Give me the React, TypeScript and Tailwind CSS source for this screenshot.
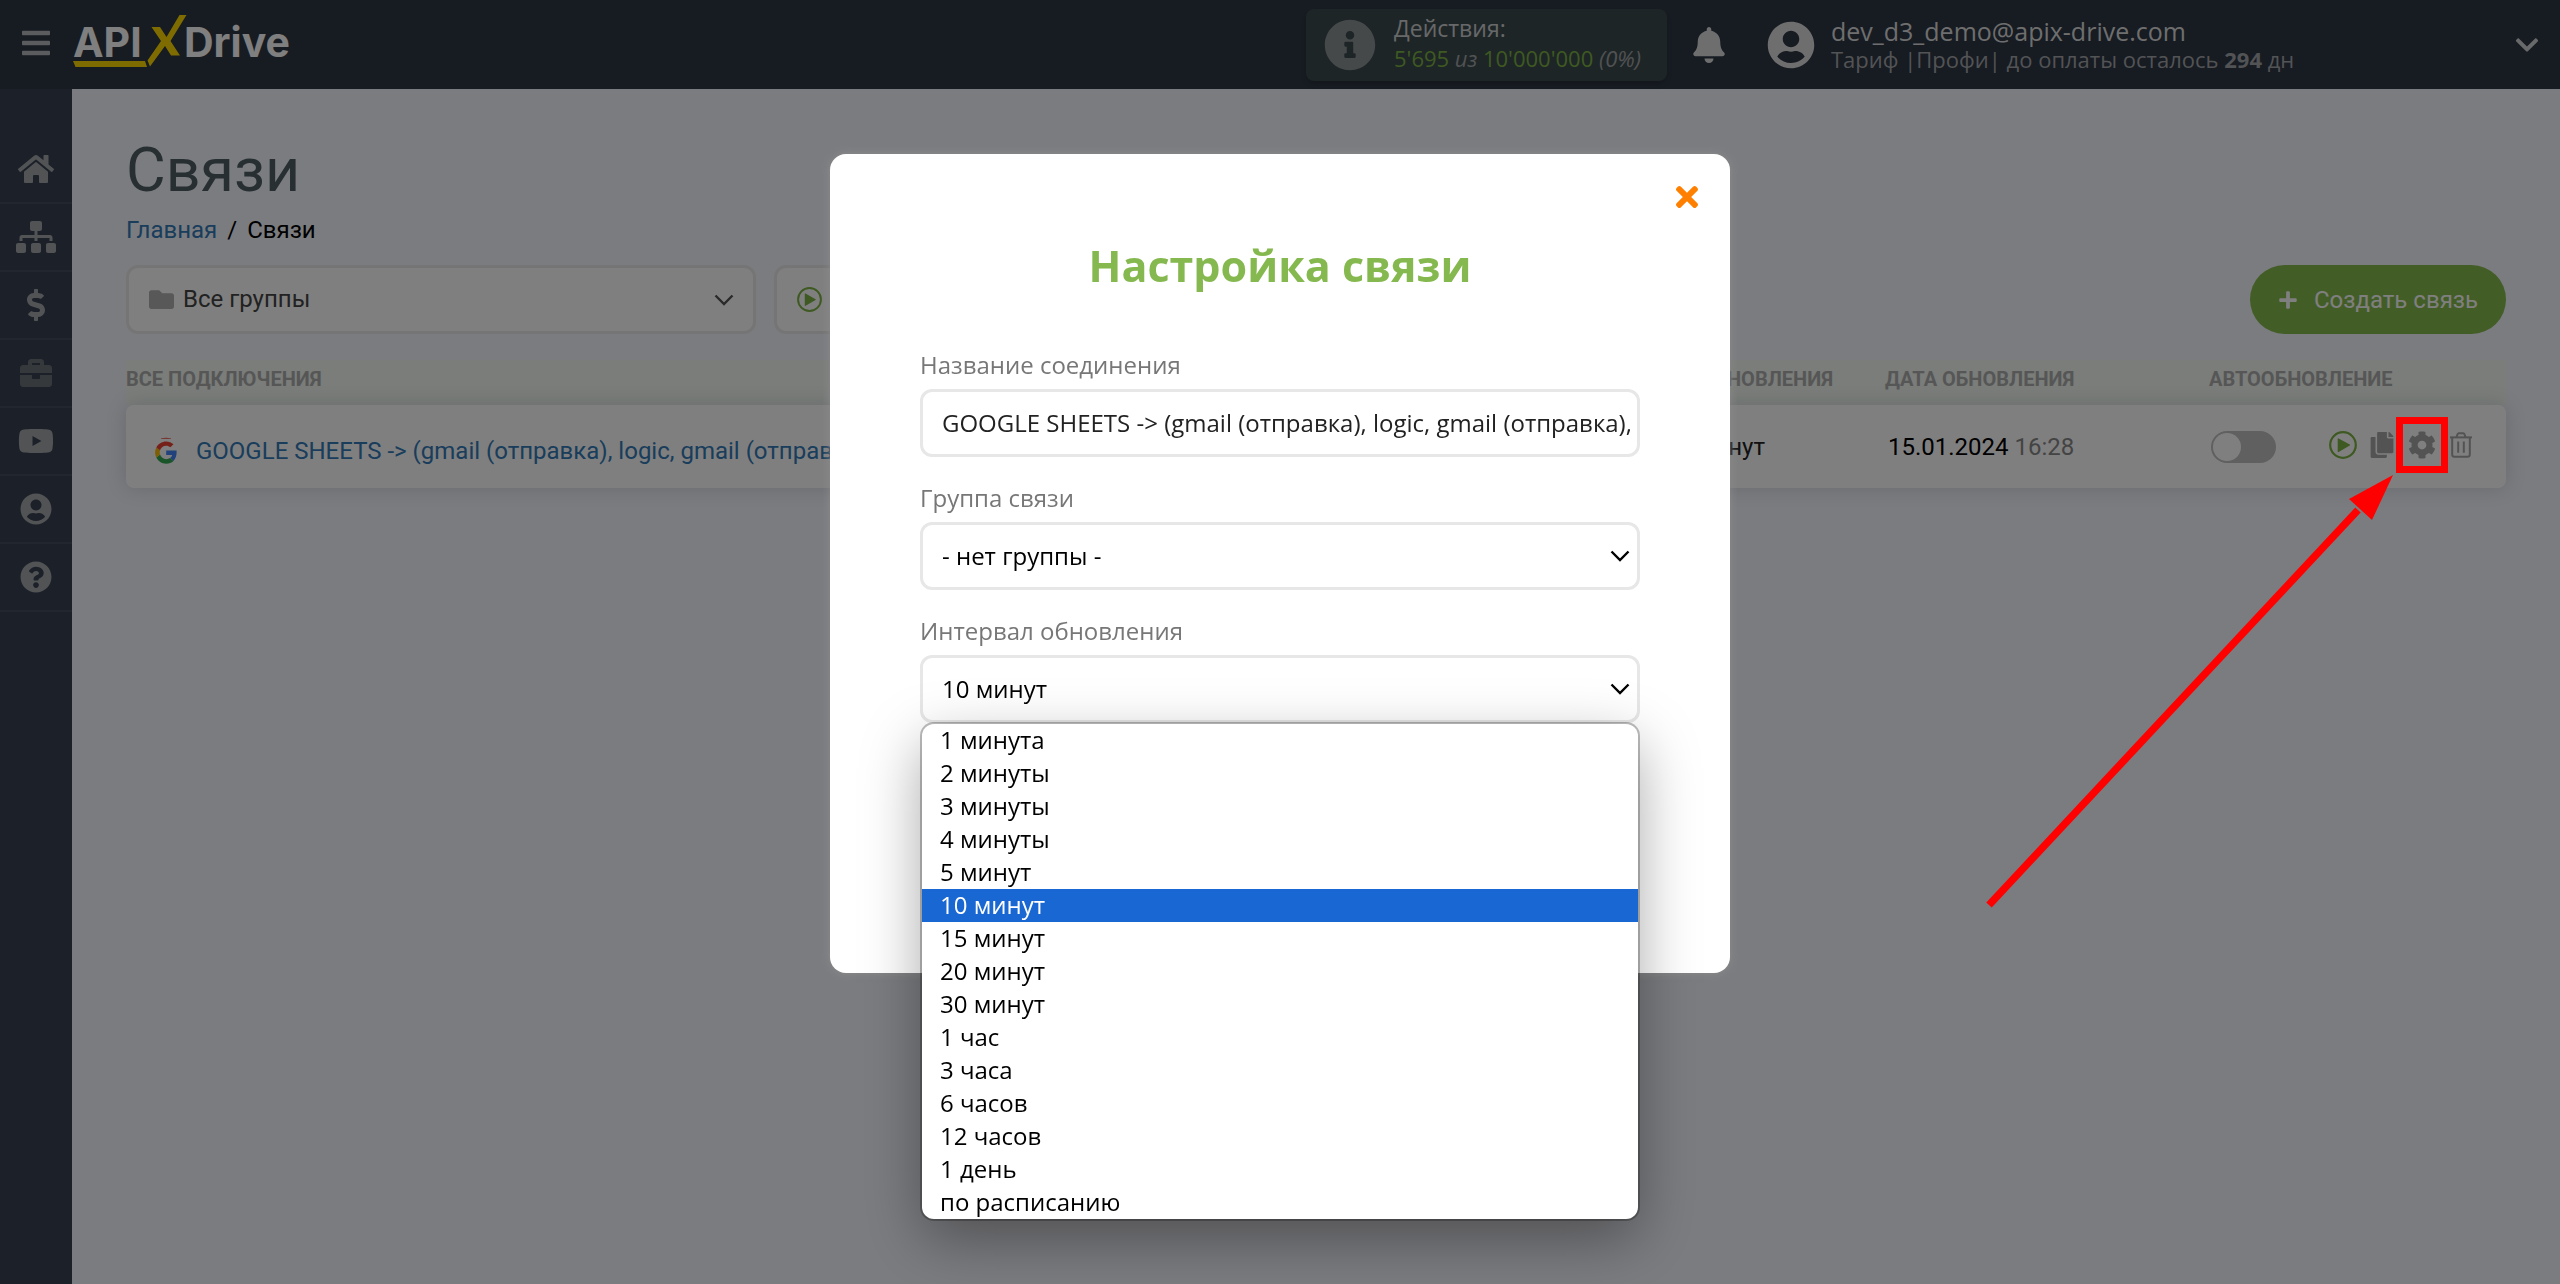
import { ReactNode, useState } from "react";
import {
  FaBars,
  FaBell,
  FaBriefcase,
  FaChevronDown,
  FaCog,
  FaCopy,
  FaDollarSign,
  FaFolder,
  FaHome,
  FaInfoCircle,
  FaPlus,
  FaQuestionCircle,
  FaSitemap,
  FaTimes,
  FaUserCircle,
  FaYoutube,
} from "react-icons/fa";

const intervals = [
  "1 минута",
  "2 минуты",
  "3 минуты",
  "4 минуты",
  "5 минут",
  "10 минут",
  "15 минут",
  "20 минут",
  "30 минут",
  "1 час",
  "3 часа",
  "6 часов",
  "12 часов",
  "1 день",
  "по расписанию",
];

const connectionName =
  "GOOGLE SHEETS -> (gmail (отправка), logic, gmail (отправка), logic)";

const navItems = [
  { title: "Главная", icon: <FaHome size={32} className="w-9" /> },
  { title: "Связи", icon: <FaSitemap size={32} className="w-10" /> },
  { title: "Тарифы", icon: <FaDollarSign size={32} /> },
  { title: "Проекты", icon: <FaBriefcase size={32} />, dim: true },
  { title: "Видео", icon: <FaYoutube size={32} className="w-9" /> },
  { title: "Профиль", icon: <FaUserCircle size={32} /> },
  { title: "Помощь", icon: <FaQuestionCircle size={32} /> },
];

const PlayIcon = ({ className }: { className?: string }) => (
  <svg viewBox="0 0 28 28" className={className} aria-hidden="true">
    <circle cx="14" cy="14" r="12.8" fill="none" stroke="currentColor" strokeWidth="2.2" />
    <path d="M9.6 7.4 20.8 13.6a.6.6 0 0 1 0 1L9.6 21a.6.6 0 0 1-.9-.5V7.9a.6.6 0 0 1 .9-.5Z" fill="currentColor" />
  </svg>
);

const TrashIcon = () => (
  <svg viewBox="0 0 22 26" className="h-[26px] w-[22px]" aria-hidden="true">
    <g fill="none" stroke="currentColor" strokeWidth="2">
      <path d="M0 5.4h22" />
      <path d="M6.4 5.4 7.6 2.2q.3-.9 1.2-.9h4.4q.9 0 1.2.9l1.2 3.2" />
      <path d="M2.2 5.4V22.6q0 2.2 2.2 2.2h13.2q2.2 0 2.2-2.2V5.4" />
      <path d="M8.2 9.4v11.4M13.8 9.4v11.4" />
    </g>
  </svg>
);

const GoogleIcon = () => (
  <svg viewBox="0 0 24 28" className="h-7 w-6" aria-hidden="true">
    <path d="M7 1.2Q12 .2 17 1.2v.6H7Z" fill="#ea4335" />
    <path d="M22.6 13.6H12.2v4.3h6c-.3 1.4-1.1 2.5-2.2 3.2l3.5 2.8c2.1-2 3.4-5.1 3.1-10.3Z" fill="#4285f4" />
    <path d="M19.5 23.9 16 21.1c-1 .7-2.3 1.1-3.8 1.1-2.9 0-5.3-1.9-6.2-4.6l-3.7 2.9c1.8 3.5 5.5 6.2 9.9 6.2 2.9 0 5.4-1 7.3-2.8Z" fill="#34a853" />
    <path d="M6 17.6c-.5-1.4-.5-2.9 0-4.3l-3.7-2.9c-1.6 3.2-1.6 6.9 0 10.1Z" fill="#fbbc05" />
    <path d="M12.2 8.7c1.6 0 3 .6 4.2 1.6l3.1-3.1C17.6 5.5 15.1 4.4 12.2 4.4c-4.4 0-8.1 2.5-9.9 6L6 13.3c.9-2.7 3.3-4.6 6.2-4.6Z" fill="#ea4335" />
  </svg>
);

const Chevron = ({ className }: { className?: string }) => (
  <svg viewBox="0 0 20 12" className={className} aria-hidden="true">
    <path d="m1.5 1.5 8.5 8.5 8.5-8.5" fill="none" stroke="currentColor" strokeWidth="2.4" />
  </svg>
);

const Logo = () => (
  <a
    href="/"
    aria-label="ApiX-Drive"
    className="relative flex h-14 items-center font-['Inter',sans-serif] text-[41px] font-bold leading-none text-white"
  >
    <span className="w-[111px]">API</span>
    <span>Drive</span>
    <svg viewBox="0 0 114 54" className="absolute left-0 top-0 h-[54px] w-[114px]" aria-hidden="true">
      <path d="M0 46h72l2 6H2.5Z" fill="#ffd800" />
      <path d="M78.5 12h8.5l6.5 10L106.5 0H113.5L97.5 26l9.5 14.5H98l-6-9.5L77 51.5l-2.5-6L88 26Z" fill="#ffd800" />
    </svg>
  </a>
);

const Header = () => (
  <header className="flex h-[89px] items-center bg-[#2e3644] font-['Open_Sans',sans-serif]">
    <button type="button" aria-label="Меню" className="mb-1 ml-5 w-8 text-[#b4b8ba]">
      <FaBars size={32} />
    </button>
    <div className="mb-1 ml-[21px]">
      <Logo />
    </div>
    <div className="ml-auto flex items-center">
      <div className="flex h-[72px] w-[361px] items-center rounded-lg bg-[#3c4a4e] pl-[18px] shadow-md">
        <FaInfoCircle size={52} className="text-[#8d9294]" />
        <div className="mb-1 ml-[18px] text-[22px] leading-[30px]">
          <p className="text-[23px] text-[#cfd1d2]">Действия:</p>
          <p className="text-[#7cb342]">
            5'695 <i className="text-[#a0a4a6]">из</i> 10'000'000{" "}
            <i className="text-[#a0a4a6]">(0%)</i>
          </p>
        </div>
      </div>
      <button type="button" aria-label="Уведомления" className="ml-6 text-[#dcdcdc]">
        <FaBell size={36} />
      </button>
      <div className="ml-10 flex w-[747px] items-center">
        <FaUserCircle size={48} className="text-[#dcdcdc]" />
        <div className="ml-4 leading-[28px]">
          <p className="text-[25px] text-[#dcdcdc]">dev_d3_demo@apix-drive.com</p>
          <p className="text-[22px] text-[#a4a7ab]">
            Тариф |Профи| до оплаты осталось <b>294</b> дн
          </p>
        </div>
      </div>
      <button type="button" aria-label="Меню профиля" className="mr-5 text-[#d0d2d4]">
        <FaChevronDown size={26} />
      </button>
    </div>
  </header>
);

const Sidebar = () => (
  <nav className="w-[72px] shrink-0 bg-[#384052] pt-[47px]">
    <ul>
      {navItems.map(({ title, icon, dim }) => (
        <li key={title} className="h-[68px] border-b-2 border-[#454e5e]">
          <a
            href="#"
            aria-label={title}
            className={`flex h-full items-center justify-center ${dim ? "text-[#6d7276]" : "text-[#a3a7a9]"}`}
          >
            {icon}
          </a>
        </li>
      ))}
    </ul>
  </nav>
);

const Filter = ({ label, icon, value }: { label: string; icon: ReactNode; value: string }) => (
  <div className="relative w-[630px]">
    <span className="absolute inset-y-0 left-[23px] flex items-center">{icon}</span>
    <select
      aria-label={label}
      className="h-[69px] w-full appearance-none rounded-xl border-3 border-[#ebebeb] bg-white pb-0.5 pl-[54px] text-2xl text-[#444]"
    >
      <option>{value}</option>
    </select>
    <Chevron className="pointer-events-none absolute right-[22px] top-[29px] h-3 w-5 text-[#555]" />
  </div>
);

// Red frame and arrow pointing at the settings button
const Pointer = () => (
  <>
    <span className="pointer-events-none absolute -inset-x-3 -inset-y-[14px] z-50 border-7 border-[#f00]" />
    <svg
      viewBox="0 0 410 435"
      className="pointer-events-none absolute right-[42px] top-11 z-50 h-[435px] w-[410px] max-w-none"
      aria-hidden="true"
    >
      <path d="M5 430 374 35" stroke="#f00" strokeWidth="7.5" />
      <path d="M409 0 365 24 388 45Z" fill="#f00" />
    </svg>
  </>
);

const Connections = () => (
  <table className="mt-[26px] w-full table-fixed border-separate border-spacing-0 text-left">
    <colgroup>
      <col />
      <col className="w-[400px]" />
      <col className="w-[324px]" />
      <col className="w-[297px]" />
    </colgroup>
    <thead className="bg-[#f4faf4] text-xl leading-6 text-[#adadad]">
      <tr className="h-[45px]">
        <th className="pb-2 font-bold">ВСЕ ПОДКЛЮЧЕНИЯ</th>
        <th className="pb-2 pr-[52px] text-right font-bold">ИНТЕРВАЛ ОБНОВЛЕНИЯ</th>
        <th className="pb-2 font-bold">ДАТА ОБНОВЛЕНИЯ</th>
        <th className="pb-2 font-bold">АВТООБНОВЛЕНИЕ</th>
      </tr>
    </thead>
    <tbody className="text-2xl">
      <tr className="h-[83px] rounded-lg bg-white shadow-[0_0_20px_rgba(60,70,90,0.2)]">
        <td className="rounded-l-lg pt-2">
          <div className="flex items-center gap-[18px] pl-7">
            <GoogleIcon />
            <a href="#" className="truncate text-[#337ab7]">
              {connectionName}
            </a>
          </div>
        </td>
        <td className="pr-[120px] text-right text-[#222]">10 минут</td>
        <td className="pl-[3px] text-black">
          15.01.2024 <span className="text-[#888]">16:28</span>
        </td>
        <td className="rounded-r-lg pl-0.5">
          <div className="flex items-center">
            <input
              type="checkbox"
              role="switch"
              aria-label="Автообновление"
              className="h-8 w-[65px] appearance-none rounded-full bg-[#c0c0c0] before:m-[2px] before:block before:size-7 before:rounded-full before:bg-white"
            />
            <div className="ml-[53px] flex items-center pb-1 text-[#a6a6a6]">
              <button type="button" aria-label="Запустить" className="text-[#7cb342]">
                <PlayIcon className="size-7" />
              </button>
              <button type="button" aria-label="Копировать" className="ml-3">
                <FaCopy size={26} />
              </button>
              <div className="relative ml-[13px] size-7">
                <button type="button" aria-label="Настройки" className="block">
                  <FaCog size={28} />
                </button>
                <Pointer />
              </div>
              <button type="button" aria-label="Удалить" className="ml-3.5">
                <TrashIcon />
              </button>
            </div>
          </div>
        </td>
      </tr>
    </tbody>
  </table>
);

const Field = ({ id, label, children }: { id: string; label: string; children: ReactNode }) => (
  <div className="mb-6">
    <label htmlFor={id} className="mb-2 block text-[#777]">
      {label}
    </label>
    <div className="relative h-[68px]">{children}</div>
  </div>
);

const control =
  "h-[68px] w-full appearance-none rounded-xl border-3 border-[#e7e7e7] bg-white pb-0.5 pl-[19px] pr-[7px]";

const SettingsDialog = () => {
  const [interval, setInterval] = useState("10 минут");

  return (
    <div className="fixed inset-0 z-40 flex items-start justify-center bg-black/50 pt-[154px] font-['Open_Sans',sans-serif] text-2xl leading-[33px]">
      <div
        role="dialog"
        aria-labelledby="dialog-title"
        className="relative w-full max-w-[900px] rounded-2xl bg-white px-[90px] pb-[226px] pt-[82px] shadow-[0_0_10px_rgba(145,145,145,0.8)]"
      >
        <button type="button" aria-label="Закрыть" className="absolute right-[27px] top-[27px] text-[#ff8000]">
          <FaTimes size={32} />
        </button>
        <h2 id="dialog-title" className="mb-[52px] text-center text-[43px] font-bold leading-[60px] text-[#85b950]">
          Настройка связи
        </h2>
        <Field id="name" label="Название соединения">
          <input id="name" type="text" defaultValue={connectionName} className={`${control} text-[#222]`} />
        </Field>
        <Field id="group" label="Группа связи">
          <select id="group" className={`${control} text-black`}>
            <option>- нет группы -</option>
          </select>
          <Chevron className="pointer-events-none absolute right-[10px] top-7 h-3 w-5" />
        </Field>
        <Field id="interval" label="Интервал обновления">
          <select
            id="interval"
            value={interval}
            onChange={(e) => setInterval(e.target.value)}
            className={`${control} text-black`}
          >
            {intervals.map((item) => (
              <option key={item}>{item}</option>
            ))}
          </select>
          <Chevron className="pointer-events-none absolute right-[10px] top-7 h-3 w-5" />
          <ul
            role="listbox"
            aria-label="Интервал обновления"
            className="absolute inset-x-0.5 top-[69px] z-10 overflow-hidden rounded-xl bg-white leading-[31px] text-black shadow-[0_0_0_2px_rgba(0,0,0,0.25),0_20px_60px_rgba(0,0,0,0.35)]"
          >
            {intervals.map((item) => (
              <li
                key={item}
                role="option"
                aria-selected={item === interval}
                onClick={() => setInterval(item)}
                className={`h-[33px] pl-[18px] ${item === interval ? "bg-[#1967d2] text-white" : ""}`}
              >
                {item}
              </li>
            ))}
          </ul>
        </Field>
      </div>
    </div>
  );
};

export default function App() {
  return (
    <div className="flex min-h-screen flex-col bg-[#f6f8ff] font-['Roboto',sans-serif]">
      <Header />
      <div className="flex flex-1">
        <Sidebar />
        <main className="min-w-0 flex-1 px-[54px] pt-[45px]">
          <h1 className="text-[61px] leading-[72px] text-[#4f5f66]">Связи</h1>
          <div className="mt-[10px] flex gap-2.5 text-2xl leading-7 text-black">
            <a href="#" className="text-[#337ab7]">
              Главная
            </a>
            <span>/</span>
            <span>Связи</span>
          </div>
          <div className="mt-[21px] flex gap-[18px]">
            <Filter label="Группа" value="Все группы" icon={<FaFolder size={25} className="text-[#b0b0b0]" />} />
            <Filter label="Статус" value="Все статусы" icon={<PlayIcon className="size-[25px] text-[#7cb342]" />} />
            <button
              type="button"
              className="ml-auto flex h-[69px] w-64 items-center justify-center gap-4 rounded-full bg-[#86ba4e] text-2xl text-white"
            >
              <FaPlus size={20} />
              Создать связь
            </button>
          </div>
          <Connections />
        </main>
      </div>
      <SettingsDialog />
    </div>
  );
}
